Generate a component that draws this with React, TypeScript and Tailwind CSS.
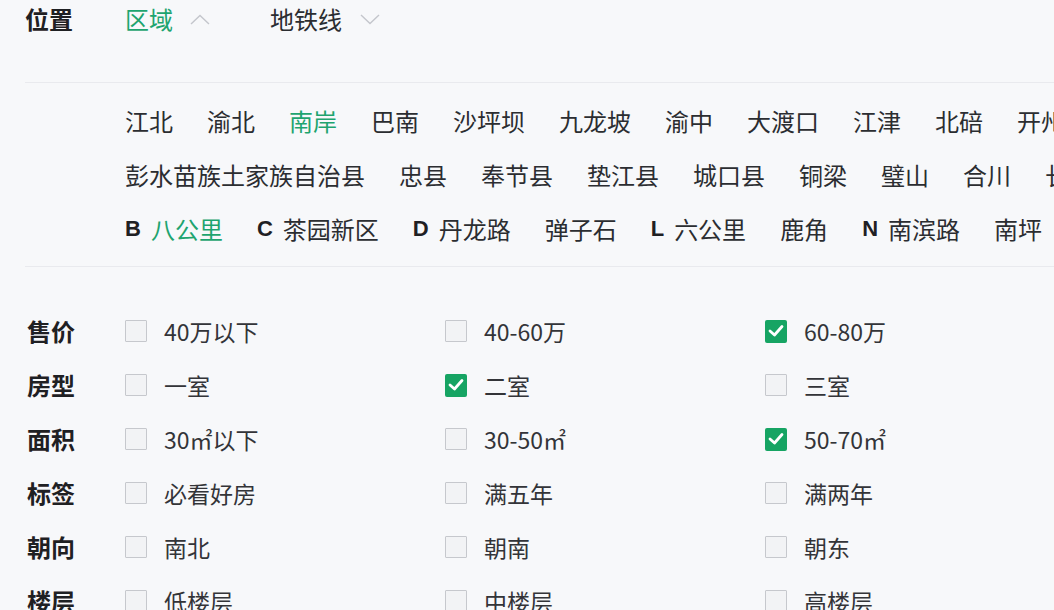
import React from "react";

const FONT = '"Noto Sans CJK SC", "Noto Sans", sans-serif';

function Chevron({ up }: { up?: boolean }) {
  return (
    <svg width="20" height="11" viewBox="0 0 20 11" className="shrink-0">
      <polyline
        points={up ? "1,10 10,1.5 19,10" : "1,1 10,9.5 19,1"}
        fill="none"
        stroke="#c4c6cc"
        strokeWidth="1.4"
      />
    </svg>
  );
}

function Box({ checked }: { checked?: boolean }) {
  if (checked) {
    return (
      <span className="flex h-[23px] w-[22px] shrink-0 items-center justify-center rounded-[2px] bg-[#16a463]">
        <svg width="16" height="14" viewBox="0 0 16 14">
          <polyline points="2,7 6.5,11 14,2.5" fill="none" stroke="#ffffff" strokeWidth="2.8" strokeLinecap="round" strokeLinejoin="round" />
        </svg>
      </span>
    );
  }
  return <span className="block h-[22px] w-[22px] shrink-0 rounded-[1px] border border-[#c6c8cd] bg-[#f2f3f5]" />;
}

const row1 = ["江北", "渝北", "南岸", "巴南", "沙坪坝", "九龙坡", "渝中", "大渡口", "江津", "北碚", "开州"];
const row2 = ["彭水苗族土家族自治县", "忠县", "奉节县", "垫江县", "城口县", "铜梁", "璧山", "合川", "长寿"];
const row3: { letter?: string; text: string; active?: boolean }[] = [
  { letter: "B", text: "八公里", active: true },
  { letter: "C", text: "茶园新区" },
  { letter: "D", text: "丹龙路" },
  { text: "弹子石" },
  { letter: "L", text: "六公里" },
  { text: "鹿角" },
  { letter: "N", text: "南滨路" },
  { text: "南坪" },
];

const filters: { label: string; opts: [string, boolean][] }[] = [
  { label: "售价", opts: [["40万以下", false], ["40-60万", false], ["60-80万", true]] },
  { label: "房型", opts: [["一室", false], ["二室", true], ["三室", false]] },
  { label: "面积", opts: [["30㎡以下", false], ["30-50㎡", false], ["50-70㎡", true]] },
  { label: "标签", opts: [["必看好房", false], ["满五年", false], ["满两年", false]] },
  { label: "朝向", opts: [["南北", false], ["朝南", false], ["朝东", false]] },
  { label: "楼层", opts: [["低楼层", false], ["中楼层", false], ["高楼层", false]] },
];

export default function App() {
  return (
    <div
      className="h-[610px] w-[1054px] overflow-hidden bg-[#f7f8fa] pl-[25px] text-[24px] leading-none text-[#2b2d31]"
      style={{ fontFamily: FONT }}
    >
      {/* header row */}
      <div className="flex h-[38px] items-center">
        <div className="w-[100px] shrink-0 font-bold text-[#1f2023]">位置</div>
        <div className="flex items-center gap-[17px] text-[#1ea46f]">
          区域
          <Chevron up />
        </div>
        <div className="ml-[60px] flex items-center gap-[18px]">
          地铁线
          <Chevron />
        </div>
      </div>

      <div className="mt-[44px] border-t border-[#e9eaee]" />

      <div className="pt-[11px] pl-[100px]">
        <div className="flex h-[54px] items-center gap-x-[34px] whitespace-nowrap">
          {row1.map((t) => (
            <span key={t} className={t === "南岸" ? "shrink-0 text-[#1ea46f]" : "shrink-0"}>
              {t}
            </span>
          ))}
        </div>
        <div className="flex h-[54px] items-center gap-x-[34px] whitespace-nowrap">
          {row2.map((t) => (
            <span key={t} className="shrink-0">{t}</span>
          ))}
        </div>
        <div className="flex h-[54px] items-center gap-x-[34px] whitespace-nowrap">
          {row3.map((it) => (
            <span key={it.text} className="flex shrink-0 items-center gap-[10px]">
              {it.letter && (
                <span
                  className="text-[22px] font-bold text-[#1f2023]"
                  style={{ fontFamily: '"Liberation Sans", Arial, sans-serif' }}
                >
                  {it.letter}
                </span>
              )}
              <span className={it.active ? "text-[#1ea46f]" : ""}>{it.text}</span>
            </span>
          ))}
        </div>
      </div>

      <div className="mt-[10px] border-t border-[#e9eaee]" />

      <div className="pt-[37px]">
        {filters.map((f) => (
          <div key={f.label} className="flex h-[54px] items-center">
            <div className="w-[100px] shrink-0 pl-[2px] font-bold text-[#1f2023]">{f.label}</div>
            {f.opts.map(([t, c]) => (
              <div key={t} className="flex w-[320px] shrink-0 items-center gap-[17px]">
                <Box checked={c} />
                <span className="text-[23px] text-[#333438]">{t}</span>
              </div>
            ))}
          </div>
        ))}
      </div>
    </div>
  );
}
